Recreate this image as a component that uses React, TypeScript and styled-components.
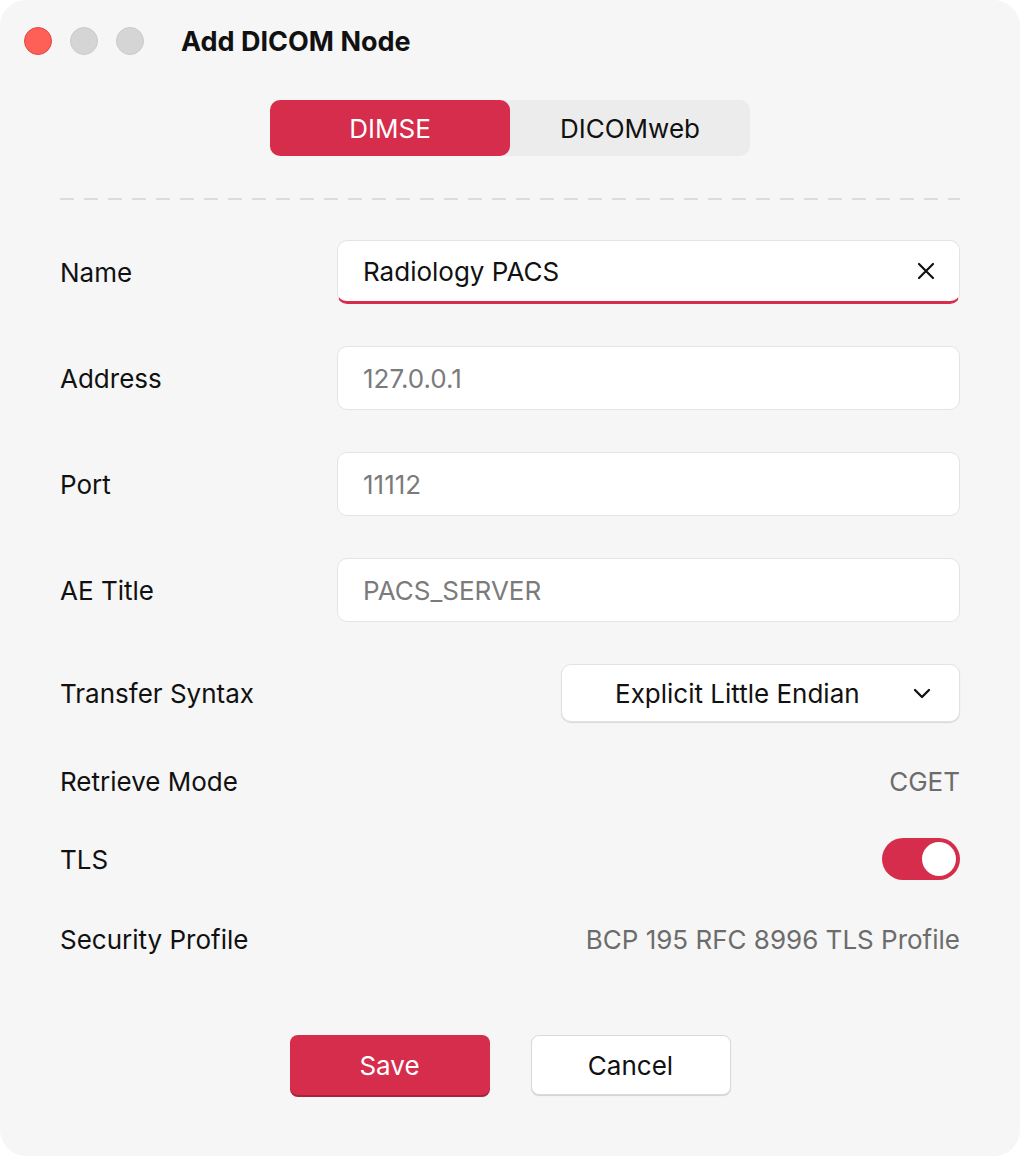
import React, { useState } from "react";
import styled, { createGlobalStyle } from "styled-components";

const Global = createGlobalStyle`
  html, body { margin: 0; padding: 0; background: #ffffff; }
  body { font-family: Inter, "Noto Sans", "Liberation Sans", sans-serif; -webkit-font-smoothing: antialiased; }
  * { box-sizing: border-box; }
`;

const ACCENT = "#d52d4b";
const FS = 26;

const Window = styled.div`
  width: 1020px;
  height: 1156px;
  background: #f6f6f6;
  border-radius: 26px;
  display: flex;
  flex-direction: column;
  overflow: hidden;
`;

const TitleBar = styled.div`
  height: 82px;
  display: flex;
  align-items: center;
  padding-left: 24px;
`;

const Lights = styled.div`
  display: flex;
  gap: 18px;
  margin-right: 37px;
`;

const Light = styled.span<{ $color: string; $border: string }>`
  width: 28px;
  height: 28px;
  border-radius: 50%;
  background: ${(p) => p.$color};
  border: 1px solid ${(p) => p.$border};
`;

const Title = styled.h1`
  margin: 0;
  font-size: 27px;
  font-weight: 700;
  color: #111;
`;

const Body = styled.div`
  padding: 18px 60px 0;
  display: flex;
  flex-direction: column;
`;

const Segmented = styled.div`
  align-self: center;
  width: 480px;
  height: 56px;
  display: grid;
  grid-template-columns: 1fr 1fr;
  background: #ececec;
  border-radius: 10px;
`;

const Segment = styled.button<{ $active?: boolean }>`
  border: none;
  border-radius: 10px;
  font-family: inherit;
  font-size: ${FS}px;
  background: ${(p) => (p.$active ? ACCENT : "transparent")};
  color: ${(p) => (p.$active ? "#fff" : "#111")};
  cursor: pointer;
`;

const Divider = styled.div`
  height: 2px;
  margin-top: 42px;
  background: repeating-linear-gradient(to right, #dcdcdc 0 14px, transparent 14px 24px);
`;

const Form = styled.div`
  margin-top: 40px;
  display: flex;
  flex-direction: column;
`;

const Row = styled.div<{ $h: number; $mt?: number }>`
  display: flex;
  align-items: center;
  justify-content: space-between;
  height: ${(p) => p.$h}px;
  margin-top: ${(p) => p.$mt ?? 0}px;
`;

const Label = styled.span`
  font-size: ${FS}px;
  color: #111;
`;

const Field = styled.div<{ $focused?: boolean }>`
  width: 623px;
  height: 64px;
  background: #fff;
  border: 1px solid #e4e4e4;
  border-bottom: ${(p) => (p.$focused ? `3px solid ${ACCENT}` : "1px solid #e4e4e4")};
  border-radius: 10px;
  display: flex;
  align-items: center;
  padding: 0 22px 0 25px;
`;

const FieldText = styled.span<{ $placeholder?: boolean }>`
  flex: 1;
  font-size: ${FS}px;
  color: ${(p) => (p.$placeholder ? "#7b7b7b" : "#111")};
`;

const ClearButton = styled.span`
  display: flex;
  width: 22px;
  height: 22px;
  align-items: center;
  justify-content: center;
`;

const Select = styled.div`
  width: 399px;
  height: 58px;
  background: #fff;
  border: 1px solid #e2e2e2;
  border-radius: 10px;
  box-shadow: 0 1px 1px rgba(0, 0, 0, 0.12);
  display: flex;
  align-items: center;
  padding: 0 28px 0 53px;
  font-size: ${FS}px;
  color: #111;
`;

const SelectText = styled.span`
  flex: 1;
`;

const Value = styled.span`
  font-size: ${FS}px;
  color: #6c6c6c;
`;

const Toggle = styled.div<{ $on: boolean }>`
  width: 78px;
  height: 42px;
  border-radius: 21px;
  background: ${(p) => (p.$on ? ACCENT : "#d0d0d0")};
  display: flex;
  align-items: center;
  justify-content: ${(p) => (p.$on ? "flex-end" : "flex-start")};
  padding: 0 4px;
  cursor: pointer;
`;

const Knob = styled.span`
  width: 34px;
  height: 34px;
  border-radius: 50%;
  background: #fff;
`;

const Footer = styled.div`
  margin-top: 75px;
  display: flex;
  justify-content: center;
  gap: 41px;
`;

const Button = styled.button<{ $primary?: boolean }>`
  width: 200px;
  height: 60px;
  border-radius: 8px;
  font-family: inherit;
  font-size: ${FS}px;
  cursor: pointer;
  background: ${(p) => (p.$primary ? ACCENT : "#fff")};
  color: ${(p) => (p.$primary ? "#fff" : "#111")};
  border: ${(p) => (p.$primary ? "none" : "1px solid #dadada")};
  box-shadow: ${(p) => (p.$primary ? "0 2px 0 #a8233b" : "0 1px 1px rgba(0,0,0,0.15)")};
`;

const XIcon = () => (
  <svg width="20" height="20" viewBox="0 0 20 20" fill="none" stroke="#111" strokeWidth="2.2" strokeLinecap="round">
    <path d="M3 3 L17 17 M17 3 L3 17" />
  </svg>
);

const Chevron = () => (
  <svg width="18" height="11" viewBox="0 0 18 11" fill="none" stroke="#111" strokeWidth="2.3" strokeLinecap="round" strokeLinejoin="round">
    <path d="M2 2 L9 9 L16 2" />
  </svg>
);

export default function App() {
  const [tab, setTab] = useState("DIMSE");
  const [tls, setTls] = useState(true);
  return (
    <>
      <Global />
      <Window>
        <TitleBar>
          <Lights>
            <Light $color="#fe5f57" $border="#e2463f" />
            <Light $color="#d5d5d5" $border="#cacaca" />
            <Light $color="#d5d5d5" $border="#cacaca" />
          </Lights>
          <Title>Add DICOM Node</Title>
        </TitleBar>
        <Body>
          <Segmented>
            <Segment $active={tab === "DIMSE"} onClick={() => setTab("DIMSE")}>DIMSE</Segment>
            <Segment $active={tab === "DICOMweb"} onClick={() => setTab("DICOMweb")}>DICOMweb</Segment>
          </Segmented>
          <Divider />
          <Form>
            <Row $h={64}>
              <Label>Name</Label>
              <Field $focused>
                <FieldText>Radiology PACS</FieldText>
                <ClearButton><XIcon /></ClearButton>
              </Field>
            </Row>
            <Row $h={64} $mt={42}>
              <Label>Address</Label>
              <Field><FieldText $placeholder>127.0.0.1</FieldText></Field>
            </Row>
            <Row $h={64} $mt={42}>
              <Label>Port</Label>
              <Field><FieldText $placeholder>11112</FieldText></Field>
            </Row>
            <Row $h={64} $mt={42}>
              <Label>AE Title</Label>
              <Field><FieldText $placeholder>PACS_SERVER</FieldText></Field>
            </Row>
            <Row $h={58} $mt={42}>
              <Label>Transfer Syntax</Label>
              <Select>
                <SelectText>Explicit Little Endian</SelectText>
                <Chevron />
              </Select>
            </Row>
            <Row $h={42} $mt={38}>
              <Label>Retrieve Mode</Label>
              <Value>CGET</Value>
            </Row>
            <Row $h={42} $mt={36}>
              <Label>TLS</Label>
              <Toggle $on={tls} onClick={() => setTls(!tls)}><Knob /></Toggle>
            </Row>
            <Row $h={42} $mt={38}>
              <Label>Security Profile</Label>
              <Value>BCP 195 RFC 8996 TLS Profile</Value>
            </Row>
          </Form>
          <Footer>
            <Button $primary>Save</Button>
            <Button>Cancel</Button>
          </Footer>
        </Body>
      </Window>
    </>
  );
}
